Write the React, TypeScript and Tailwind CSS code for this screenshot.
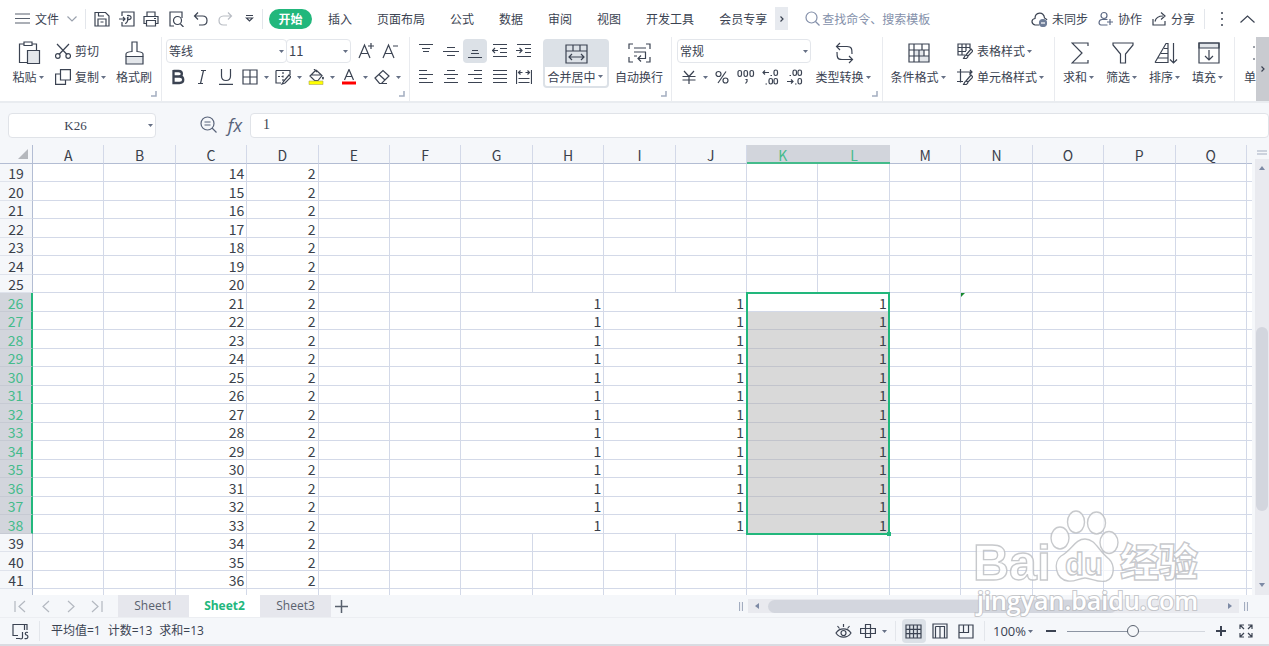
import React, { useState } from "react";

type IconProps = {
  w?: number;
  h?: number;
  className?: string;
  children: React.ReactNode;
};

const Icon = ({ w = 16, h = 16, className = "", children }: IconProps) => (
  <svg
    width={w}
    height={h}
    viewBox={`0 0 ${w} ${h}`}
    fill="none"
    stroke="currentColor"
    strokeWidth="1.2"
    className={`shrink-0 ${className}`}
    aria-hidden="true"
  >
    {children}
  </svg>
);

const Caret = () => (
  <span className="w-[9px] h-4 flex items-center justify-center shrink-0">
    <Icon w={5} h={3}>
      <path d="M0 0H5L2.5 3Z" fill="#667085" stroke="none" />
    </Icon>
  </span>
);

const Divider = () => <div className="w-px h-5 bg-[#e3e6eb] shrink-0" />;

const Launcher = () => (
  <button aria-label="更多设置" className="absolute right-1 bottom-1">
    <Icon w={6} h={6}>
      <path d="M5 0V5H0" stroke="#a3adc0" strokeWidth="1.5" />
    </Icon>
  </button>
);

/* ---------- top bar ---------- */

const quickIcons = [
  {
    name: "保存",
    icon: (
      <Icon>
        <path d="M1 1.500H11.500L15 5V15H1Z M4 15V8H12V15 M4.500 1.500V5H10 M6.500 11H9.500" />
      </Icon>
    ),
  },
  {
    name: "输出为PDF",
    icon: (
      <Icon>
        <path d="M3 5V1H15V15H3V11 M0 8H6 M4 6L6 8L4 10" />
        <path d="M8 4.500C13 3.500 13.500 9 9 8.500C8 8 8.500 6 9 6C9 9 9 12 6 12.500" />
      </Icon>
    ),
  },
  {
    name: "打印",
    icon: (
      <Icon>
        <path d="M4 5V1H12V5 M3.500 12.500H1V5.500H15V12.500H12.500 M3.500 9.500H12.500V15H3.500Z M11 7.500H13" />
      </Icon>
    ),
  },
  {
    name: "打印预览",
    icon: (
      <Icon>
        <path d="M6 15H2V1H14V7 M12.500 13L15.500 16" />
        <circle cx="9.500" cy="9.500" r="4" />
      </Icon>
    ),
  },
  {
    name: "撤销",
    icon: (
      <Icon>
        <path d="M5 1.500L1.500 5L5 8.500 M1.500 5H9.500C15.500 5 15.500 14 9.500 14H6" />
      </Icon>
    ),
  },
  {
    name: "恢复",
    icon: (
      <Icon className="text-[#b9bdc4]">
        <path d="M11 1.500L14.500 5L11 8.500 M14.500 5H6.500C.5 5 .5 14 6.500 14H10" />
      </Icon>
    ),
  },
  {
    name: "自定义",
    icon: (
      <Icon w={9} h={9}>
        <path d="M1 1.500H8 M1.500 4L4.500 7L7.500 4Z" />
      </Icon>
    ),
  },
];

const menus = [
  "插入",
  "页面布局",
  "公式",
  "数据",
  "审阅",
  "视图",
  "开发工具",
  "会员专享",
];

const TopBar = () => (
  <header className="h-[37px] flex items-center shrink-0">
    <button className="flex items-center pl-[15px]">
      <Icon w={15} h={11} className="mr-[5px]">
        <path d="M0 1H15 M0 5.500H15 M0 10H15" stroke="#59616e" />
      </Icon>
      文件
      <Icon w={10} h={6} className="ml-2">
        <path d="M.5 .5L5 5L9.500 .5" stroke="#9aa1ad" />
      </Icon>
    </button>
    <div className="ml-2 mr-1">
      <Divider />
    </div>
    <div className="w-[172px] flex justify-between">
      {quickIcons.map((item) => (
        <button
          key={item.name}
          aria-label={item.name}
          className="w-6 h-6 flex items-center justify-center"
        >
          {item.icon}
        </button>
      ))}
    </div>
    <Divider />
    <nav className="flex items-center gap-[25px] ml-1.5">
      <button className="w-[43px] h-5 rounded-full bg-[#22b77c] text-white font-bold -mr-[9px]">
        开始
      </button>
      {menus.map((menu) => (
        <button key={menu}>{menu}</button>
      ))}
    </nav>
    <button
      aria-label="更多选项卡"
      className="w-[13px] h-[23px] bg-[#e7eaef] ml-2 flex items-center justify-center"
    >
      <Icon w={4} h={6}>
        <path d="M.5 .5L3 3L.5 5.500" />
      </Icon>
    </button>
    <label className="flex items-center ml-[17px] text-[#8490aa]">
      <Icon className="mr-px">
        <circle cx="6.500" cy="6.500" r="5.500" />
        <path d="M10.500 10.500L14.500 14.500" />
      </Icon>
      <input
        aria-label="查找命令、搜索模板"
        placeholder="查找命令、搜索模板"
        className="w-[120px] outline-none placeholder:text-[#8490aa]"
      />
    </label>
    <div className="ml-auto flex items-center">
      <button className="flex items-center gap-1">
        <Icon w={17}>
          <path d="M8 14H4C0 13 0 8 4 7.500C4 1 13 0 13.500 7C15 7.500 15.500 8 16 9" />
          <circle cx="12" cy="12" r="3.500" fill="#6f7d98" stroke="#6f7d98" />
          <path d="M10 12H14" stroke="#fff" />
        </Icon>
        未同步
      </button>
      <button className="flex items-center gap-1 ml-2.5">
        <Icon className="text-[#5d6a85]">
          <circle cx="6" cy="4.500" r="3" />
          <path d="M9.500 8.500H4C0 9 .5 14 3 14H9.500 M9 11H15 M12 8V14" />
        </Icon>
        协作
      </button>
      <button className="flex items-center gap-1 ml-2.5">
        <Icon w={15}>
          <path d="M1 8V14H13V10 M3 10.500C4 6 7 5 11 5 M9 1.500L13 5L9 8.500" />
        </Icon>
        分享
      </button>
      <div className="ml-[9px] mr-4">
        <Divider />
      </div>
      <button aria-label="更多">
        <Icon w={2} h={14}>
          <path d="M0 1H2 M0 7H2 M0 13H2" strokeWidth="1.500" />
        </Icon>
      </button>
      <button aria-label="收起功能区" className="ml-[17px] mr-[14px]">
        <Icon w={15} h={8}>
          <path d="M.5 7.500L7.500 1L14.500 7.500" />
        </Icon>
      </button>
    </div>
  </header>
);

/* ---------- ribbon ---------- */

const Group = ({
  className,
  launcher,
  children,
}: {
  className: string;
  launcher?: boolean;
  children: React.ReactNode;
}) => (
  <section
    className={`relative flex items-start pt-0.5 border-r border-[#e9ebef] shrink-0 ${className}`}
  >
    {children}
    {launcher && <Launcher />}
  </section>
);

const BigButton = ({
  label,
  icon,
  caret,
  className,
}: {
  label: string;
  icon: React.ReactNode;
  caret?: boolean;
  className: string;
}) => (
  <button className={`flex flex-col items-center shrink-0 ${className}`}>
    <span className="h-7 flex items-center">{icon}</span>
    <span className="h-5 flex items-center whitespace-nowrap">
      {label}
      {caret && <Caret />}
    </span>
  </button>
);

const RowButton = ({
  label,
  icon,
  caret,
}: {
  label: string;
  icon: React.ReactNode;
  caret?: boolean;
}) => (
  <button className="h-6 flex items-center gap-1 whitespace-nowrap">
    {icon}
    <span className="flex items-center">
      {label}
      {caret && <Caret />}
    </span>
  </button>
);

const Tool = ({
  name,
  caret,
  active,
  children,
}: {
  name: string;
  caret?: boolean;
  active?: boolean;
  children: React.ReactNode;
}) => (
  <button
    aria-label={name}
    className={`h-6 flex items-center shrink-0 rounded-sm ${
      active ? "bg-[#dce1e7]" : ""
    }`}
  >
    <span className="w-6 flex items-center justify-center">{children}</span>
    {caret && <Caret />}
  </button>
);

const Combo = ({
  name,
  options,
  className,
}: {
  name: string;
  options: string[];
  className: string;
}) => (
  <div
    className={`h-6 flex items-center border border-[#e3e6eb] rounded-sm ${className}`}
  >
    <select
      aria-label={name}
      className="appearance-none flex-1 min-w-0 h-full pl-0.5 outline-none"
    >
      {options.map((o) => (
        <option key={o}>{o}</option>
      ))}
    </select>
    <Caret />
  </div>
);

const Lines = ({ d }: { d: string }) => (
  <Icon>
    <path d={d} />
  </Icon>
);

const vAligns = [
  { name: "顶端对齐", d: "M1 1.500H15 M4 5.500H12 M5 8.500H11" },
  { name: "垂直居中", d: "M4 4.500H12 M0 8.500H16 M4 12.500H12" },
  { name: "底端对齐", d: "M5 7.500H11 M4 10.500H12 M1 14.500H15", active: true },
  {
    name: "减少缩进",
    d: "M1 1.500H15 M8 5.500H15 M8 9.500H15 M1 13.500H15 M0 7.500H6 M3 5L.5 7.500L3 10",
  },
  {
    name: "增加缩进",
    d: "M1 1.500H15 M9 5.500H15 M9 9.500H15 M1 13.500H15 M0 7.500H6 M3.500 5L6 7.500L3.500 10",
  },
];

const hAligns = [
  { name: "左对齐", d: "M1 1.500H9 M1 5.500H15 M1 9.500H9 M1 13.500H15" },
  { name: "水平居中", d: "M4 1.500H12 M1 5.500H15 M4 9.500H12 M1 13.500H15" },
  { name: "右对齐", d: "M7 1.500H15 M1 5.500H15 M7 9.500H15 M1 13.500H15" },
  { name: "两端对齐", d: "M1 1.500H15 M1 5.500H15 M1 9.500H15 M1 13.500H15" },
  {
    name: "分散对齐",
    d: "M.5 1V15 M15.500 1V15 M2.500 9.500H13.500 M2.500 13.500H13.500 M2 3.500H6.500 M9.500 3.500H14 M4.500 1.500L2.500 3.500L4.500 5.500 M11.500 1.500L13.500 3.500L11.500 5.500",
  },
];

const ClipboardGroup = () => (
  <Group className="w-[162px] pl-2" launcher>
    <BigButton
      label="粘贴"
      caret
      className="w-[42px]"
      icon={
        <Icon w={23} h={24}>
          <path d="M6 3H1.500V21.500H9 M14 3H18.500V9 M6 1H14V4.500H6Z" />
          <path d="M9.500 9.500H21.500V22.500H9.500Z" fill="#e3e6ea" />
        </Icon>
      }
    />
    <div className="ml-[5px] w-[59px] flex flex-col gap-0.5">
      <RowButton
        label="剪切"
        icon={
          <Icon>
            <path d="M2 1L12 11.500 M14 1L4 11.500" />
            <circle cx="2.800" cy="13" r="2.300" />
            <circle cx="13.200" cy="13" r="2.300" />
          </Icon>
        }
      />
      <RowButton
        label="复制"
        caret
        icon={
          <Icon>
            <path d="M5.500 .6H15.400V11H5.500Z M5.500 5H.6V15.400H10.500V11" />
          </Icon>
        }
      />
    </div>
    <BigButton
      label="格式刷"
      className="w-10"
      icon={
        <Icon w={19} h={24}>
          <path d="M1 15.500H18V23H1Z" fill="#e3e6ea" />
          <path d="M1 15.500V13C1 11.500 2 11 7 10.500V1H12V10.500C17 11 18 11.500 18 13V15.500" />
        </Icon>
      }
    />
  </Group>
);

const FontGroup = () => (
  <Group className="w-[248px] pl-1 flex-col gap-0.5" launcher>
    <div className="flex">
      <Combo name="字体" options={["等线", "宋体"]} className="w-[121px]" />
      <Combo
        name="字号"
        options={["11", "12", "14"]}
        className="w-[65px] mr-[3px] -ml-px text-[13px]"
      />
      <Tool name="增大字号">
        <Icon>
          <path d="M1 15L6.500 2L12 15 M3 10.500H10 M10 3H16 M13 0V6" />
        </Icon>
      </Tool>
      <Tool name="减小字号">
        <Icon>
          <path d="M1 15L6.500 2L12 15 M3 10.500H10 M11 3H16" />
        </Icon>
      </Tool>
    </div>
    <div className="flex">
      <Tool name="加粗">
        <Icon>
          <path
            d="M3.500 2H8.500C13 2 13 7.500 8.500 7.500H3.500 M3.500 7.500H9.500C14.500 7.500 14.500 14 9.500 14H3.500V1"
            strokeWidth="2.300"
          />
        </Icon>
      </Tool>
      <Tool name="倾斜">
        <Icon>
          <path d="M7 1.500H12 M4 14.500H9 M9.500 1.500L6.500 14.500" />
        </Icon>
      </Tool>
      <Tool name="下划线">
        <Icon>
          <path d="M3.500 0V7C3.500 13 12.500 13 12.500 7V0 M1 15.400H15" />
        </Icon>
      </Tool>
      <Tool name="边框" caret>
        <Icon>
          <path d="M1 1H15V15H1Z M8 1V15 M1 8H15" />
        </Icon>
      </Tool>
      <Tool name="绘图边框" caret>
        <Icon>
          <path d="M1 1.500H15V6 M1 1.500V14H6" />
          <path d="M3 7.500H10 M8 3V12" strokeDasharray="2 1.500" />
          <path d="M8.500 12.500L14 6L16 8L10 14L7 15Z" />
        </Icon>
      </Tool>
      <Tool name="填充颜色" caret>
        <Icon>
          <path d="M8 1L2 7L6.500 11.500H10L14 6.500L8 1 M6 0L9 3 M3 6H13 M15 8C14 10 16 11 15 8" />
          <path d="M1 12H15V15.500H1Z" fill="#ff0" stroke="#a8a45a" strokeWidth=".6" />
        </Icon>
      </Tool>
      <Tool name="字体颜色" caret>
        <Icon>
          <path d="M3.500 11L8 .5L12.500 11 M5 7.500H11" />
          <path d="M1 12.500H15V15.500H1Z" fill="#f00" stroke="none" />
        </Icon>
      </Tool>
      <Tool name="清除格式" caret>
        <Icon>
          <path d="M1 9L9 1.500L15 7L7.500 14.500H5.500Z M5 5.500L11 11 M7 14.500H13" />
        </Icon>
      </Tool>
    </div>
  </Group>
);

const AlignGroup = () => (
  <Group className="w-[262px] pl-1" launcher>
    <div className="w-[122px] flex flex-col gap-0.5">
      <div className="flex justify-between">
        {vAligns.map((a) => (
          <Tool key={a.name} name={a.name} active={a.active}>
            <Lines d={a.d} />
          </Tool>
        ))}
      </div>
      <div className="flex justify-between">
        {hAligns.map((a) => (
          <Tool key={a.name} name={a.name}>
            <Lines d={a.d} />
          </Tool>
        ))}
      </div>
    </div>
    <button className="ml-[7px] w-[66px] h-[49px] flex flex-col shrink-0 rounded-sm border-2 border-[#dce1e7] bg-white">
      <span className="h-[26px] w-full flex items-center justify-center bg-[#dce1e7]">
        <Icon w={23} h={20}>
          <path d="M1 1H22V19H1Z M1 7H22 M8 1V7 M15 1V7 M4 13H19 M7 10L4 13L7 16 M16 10L19 13L16 16" />
        </Icon>
      </span>
      <span className="h-[19px] w-full flex items-center justify-center whitespace-nowrap">
        合并居中
        <Caret />
      </span>
    </button>
    <BigButton
      label="自动换行"
      className="w-[52px] ml-1"
      icon={
        <Icon w={23} h={20}>
          <path d="M5 1H1V6 M18 1H22V6 M1 14V19H5 M22 14V19H18 M6 5H18 M6 9H18 M6 13H9 M17.500 9V15.500H10 M13 12.500L10 15.500L13 18.500" />
        </Icon>
      }
    />
  </Group>
);

const NumberGroup = () => (
  <Group className="w-[211px] pl-[5px]" launcher>
    <div className="w-[134px] flex flex-col gap-0.5">
      <Combo name="数字格式" options={["常规", "数值", "文本"]} className="w-full" />
      <div className="flex">
        <Tool name="货币" caret>
          <Icon>
            <path d="M3 2L8 7.500L13 2 M1.500 7.500H14.500 M1.500 11H14.500 M8 7.500V15" />
          </Icon>
        </Tool>
        <Tool name="百分比">
          <Icon>
            <circle cx="4.500" cy="5" r="2.500" />
            <circle cx="11.500" cy="11.500" r="2.500" />
            <path d="M12 2.500L4 14" />
          </Icon>
        </Tool>
        <Tool name="千位分隔">
          <Icon w={18}>
            <rect x="1" y="1.500" width="3.500" height="6" rx="1.700" />
            <rect x="7" y="1.500" width="3.500" height="6" rx="1.700" />
            <rect x="13" y="1.500" width="3.500" height="6" rx="1.700" />
            <path d="M8.500 10.500H10V12.500L8.500 14.500" />
          </Icon>
        </Tool>
        <Tool name="增加小数位">
          <Icon w={17}>
            <path d="M1 3.500H7 M3 1.500L1 3.500L3 5.500 M8.500 6.500H10 M3.500 15H5" />
            <rect x="12" y="1" width="3.500" height="5.500" rx="1.700" />
            <rect x="7" y="9.500" width="3.500" height="5.500" rx="1.700" />
            <rect x="12" y="9.500" width="3.500" height="5.500" rx="1.700" />
          </Icon>
        </Tool>
        <Tool name="减少小数位">
          <Icon w={17}>
            <path d="M1 12.500H7 M5 10.500L7 12.500L5 14.500 M3.500 6.500H5 M9 15H10.500" />
            <rect x="7" y="1" width="3.500" height="5.500" rx="1.700" />
            <rect x="12" y="1" width="3.500" height="5.500" rx="1.700" />
            <rect x="12" y="9.500" width="3.500" height="5.500" rx="1.700" />
          </Icon>
        </Tool>
      </div>
    </div>
    <BigButton
      label="类型转换"
      caret
      className="w-[60px] ml-[3px]"
      icon={
        <Icon w={19} h={22}>
          <path d="M5 1L1.500 4.500L5 8 M1.500 4.500H12C17 4.500 17 7 17 12 M2 10C2 15 2 17.500 7 17.500H17.500 M14 14L17.500 17.500L14 21" />
        </Icon>
      }
    />
  </Group>
);

const StyleGroup = () => (
  <Group className="w-[172px] pl-1.5">
    <BigButton
      label="条件格式"
      caret
      className="w-[60px]"
      icon={
        <Icon w={22} h={20}>
          <path d="M6 7H16V13H21V19H11V13H6Z" fill="#e3e6ea" stroke="none" />
          <path d="M1 1H21V19H1Z M1 7H21 M1 13H21 M6 1V19 M14 1V7 M11 7V19 M16 7V13" />
        </Icon>
      }
    />
    <div className="ml-2 flex flex-col gap-0.5">
      <RowButton
        label="表格样式"
        caret
        icon={
          <Icon>
            <path d="M8 12H1V1H13V6 M1 4.500H13 M1 8.500H9 M5 1V12 M9 1V8" />
            <path d="M9 12L14 6L16 8L11 13Z M9 12C7 12.500 8 15 6 15.500C9 16 11 15 11 13" />
          </Icon>
        }
      />
      <RowButton
        label="单元格样式"
        caret
        icon={
          <Icon>
            <path d="M0 3H15 M3.500 0V13.500 M13 1L15 3L13 5 M0 12.500H6 M13 3V6" />
            <path d="M9 12L14 6L16 8L11 13Z M9 12C7 12.500 8 15 6 15.500C9 16 11 15 11 13" />
          </Icon>
        }
      />
    </div>
  </Group>
);

const editTools = [
  {
    label: "求和",
    icon: (
      <Icon w={18} h={22}>
        <path d="M17 4V1H1L11 11L1 21H17V18" />
      </Icon>
    ),
  },
  {
    label: "筛选",
    icon: (
      <Icon w={22} h={22}>
        <path d="M1 1H21V3L13.500 12V21H8.500V12L1 3Z" />
      </Icon>
    ),
  },
  {
    label: "排序",
    icon: (
      <Icon w={24} h={22}>
        <path d="M1 20.500L12 1.500H14V20.500H1 M10 6.500H14 M7 11.500H14 M4 16H14 M19.500 1V21 M16 17.500L19.500 21L23 17.500" />
      </Icon>
    ),
  },
  {
    label: "填充",
    icon: (
      <Icon w={22} h={22}>
        <path d="M1 1H21V6H1Z" fill="#e3e6ea" />
        <path d="M1 1H21V21H1Z M11 8V18 M7 14L11 18L15 14" />
      </Icon>
    ),
  },
];

const Ribbon = () => (
  <div className="h-16 flex shrink-0 overflow-hidden">
    <ClipboardGroup />
    <FontGroup />
    <AlignGroup />
    <NumberGroup />
    <StyleGroup />
    <Group className="w-[180px] pl-[3px]">
      {editTools.map((tool) => (
        <BigButton
          key={tool.label}
          label={tool.label}
          icon={tool.icon}
          caret
          className="w-[43px]"
        />
      ))}
    </Group>
    <div className="flex-1 min-w-0 overflow-hidden flex items-start pt-0.5 pl-[7px]">
      <BigButton
        label="单元格"
        className="w-10"
        icon={
          <Icon w={20} h={20}>
            <path d="M1 4H3 M1 16H3 M7 4H19V16H7" />
          </Icon>
        }
      />
    </div>
    <button
      aria-label="向右滚动功能区"
      className="w-[13px] shrink-0 bg-[#c9cbd0] flex items-center justify-center"
    >
      <Icon w={4} h={6}>
        <path d="M.5 .5L3 3L.5 5.500" />
      </Icon>
    </button>
  </div>
);

const FormulaBar = () => (
  <div className="h-[43px] flex items-center pl-2 pb-px border-t-2 border-[#e9ecf0] shrink-0 pt-1">
    <div className="w-[148px] h-[25px] flex items-center bg-white border border-[#e0e3e8] rounded-sm">
      <input
        aria-label="名称框"
        defaultValue="K26"
        className="flex-1 min-w-0 pr-1 pt-0.5 text-center text-[13px] font-[Liberation_Serif,serif] outline-none"
      />
      <Caret />
    </div>
    <button aria-label="浏览公式结果" className="ml-11">
      <Icon w={18} h={18} className="text-[#59647a]">
        <circle cx="7.500" cy="7.500" r="6.500" />
        <path d="M12 12L16.500 16.500 M4.500 6H10.500 M4.500 9H10.500" />
      </Icon>
    </button>
    <button
      aria-label="插入函数"
      className="ml-[7px] w-5 text-[18px] leading-5 italic font-[Open_Sans,sans-serif] text-[#59647a]"
    >
      fx
    </button>
    <input
      aria-label="编辑栏"
      defaultValue="1"
      className="ml-[5px] flex-1 min-w-0 h-[25px] pl-3 bg-white border border-[#e0e3e8] rounded-sm text-[14px] font-[Liberation_Serif,serif] outline-none"
    />
  </div>
);

/* ---------- sheet ---------- */

const columns = "ABCDEFGHIJKLMNOPQ".split("");
const rows = Array.from({ length: 24 }, (_, i) => 19 + i);
const FIRST = 26;
const LAST = 38;

const cell =
  "border-r border-b border-[#d3d9e8] px-0.5 pt-0.5 pb-0 text-right leading-[15px]";

const SheetRow = ({ n }: { n: number }) => {
  const selected = n >= FIRST && n <= LAST;
  const merged = selected ? ["GH", "IJ", "KL"] : [];
  const height = n % 2 ? "h-[18px]" : "h-[19px]";

  const valueOf = (col: string) => {
    if (n > 41) return "";
    if (col === "C") return n - 5;
    if (col === "D") return 2;
    return "";
  };

  return (
    <tr className={height}>
      <th
        scope="row"
        className={`px-0 pt-0.5 pb-0 border-b font-normal leading-[15px] ${
          selected
            ? "bg-[#d2d5dc] text-[#44bb8b] border-[#c6cad3] border-r-2 border-r-[#22b77c]"
            : "border-[#dfe3ec] border-r border-r-[#b3bdd3]"
        }`}
      >
        {n > 41 ? "" : n}
      </th>
      {columns.map((col) => {
        const span = merged.find((m) => m[0] === col);
        if (!span && merged.some((m) => m[1] === col)) return null;
        if (span === "KL") {
          return (
            <td
              key={col}
              colSpan={2}
              className={`relative ${cell} ${
                n === FIRST ? "bg-white" : "bg-[#d9d9d9] border-b-[#c2c4cc]"
              }`}
            >
              1
              {n === FIRST && (
                <div className="absolute z-10 -left-px -right-px -top-px h-[243px] border-2 border-[#22b77c] pointer-events-none">
                  <div className="absolute -right-[3px] -bottom-[3px] size-1 bg-[#22b77c]" />
                </div>
              )}
            </td>
          );
        }
        return (
          <td
            key={col}
            colSpan={span ? 2 : 1}
            className={`${cell} bg-white ${col === "N" ? "relative" : ""}`}
          >
            {span ? 1 : valueOf(col)}
            {col === "N" && n === FIRST && (
              <Icon w={4} h={4} className="absolute left-0 top-0">
                <path d="M0 0H4L0 4Z" fill="#18892f" stroke="none" />
              </Icon>
            )}
          </td>
        );
      })}
      <td className="border-b border-[#d3d9e8] bg-white p-0" />
    </tr>
  );
};

const Grid = () => (
  <div className="flex-1 min-w-0 overflow-hidden">
    <table className="w-full table-fixed border-separate border-spacing-0 text-[14px] font-['Noto_Sans_CJK_SC',sans-serif] text-[#3a3f4a]">
      <colgroup>
        <col className="w-[33px]" />
        {columns.map((c) => (
          <col key={c} />
        ))}
        <col className="w-[5px]" />
      </colgroup>
      <thead>
        <tr className="h-[19px]">
          <th className="p-0 border-b border-r border-[#b3bdd3]">
            <Icon w={10} h={10} className="ml-auto mr-1">
              <path d="M10 0V10H0Z" fill="#b5b8bd" stroke="none" />
            </Icon>
          </th>
          {columns.map((c) => (
            <th
              key={c}
              scope="col"
              className={`px-0 pt-0.5 pb-0 font-normal leading-4 border-b ${
                c === "K" || c === "L"
                  ? "bg-[#d2d5dc] text-[#44bb8b] border-[#44bb8b] shadow-[inset_0_-1px_0_#44bb8b]"
                  : "border-r border-b-[#b3bdd3] border-r-[#d3d9e8]"
              }`}
            >
              {c}
            </th>
          ))}
          <th className="p-0 border-b border-[#b3bdd3]" />
        </tr>
      </thead>
      <tbody>
        {rows.map((n) => (
          <SheetRow key={n} n={n} />
        ))}
      </tbody>
    </table>
  </div>
);

const VerticalScroll = () => (
  <div className="w-[17px] pl-[3px] flex flex-col items-stretch shrink-0">
    <div className="h-[14px] flex items-center justify-center">
      <Icon w={10} h={5}>
        <path d="M0 1H10 M0 4H10" stroke="#a3adc0" />
      </Icon>
    </div>
    <div className="flex-1 bg-[#e9eaef] flex flex-col items-center">
      <Icon w={6} h={4} className="mt-[7px]">
        <path d="M0 4H6L3 0Z" fill="#7d8aa5" stroke="none" />
      </Icon>
      <div className="flex-1 w-full flex flex-col px-px">
        <div className="grow-[157]" />
        <div className="grow-[184] rounded-full bg-[#d3d6de]" />
        <div className="grow-[72]" />
      </div>
      <Icon w={6} h={4} className="mb-2">
        <path d="M0 0H6L3 4Z" fill="#7d8aa5" stroke="none" />
      </Icon>
    </div>
  </div>
);

const sheetNav = [
  { name: "第一张", d: "M1 1V12 M11 1L5 6.500L11 12" },
  { name: "上一张", d: "M9 1L3 6.500L9 12" },
  { name: "下一张", d: "M3 1L9 6.500L3 12" },
  { name: "最后一张", d: "M1 1L7 6.500L1 12 M11 1V12" },
];

const SheetTabs = () => {
  const [active, setActive] = useState("Sheet2");

  return (
    <div className="h-[22px] flex items-center shrink-0 text-[#59616e]">
      <div className="w-[118px] flex justify-between pl-[14px] pr-[15px]">
        {sheetNav.map((b) => (
          <button key={b.name} aria-label={b.name}>
            <Icon w={12} h={13} className="text-[#b3b8c0]">
              <path d={b.d} />
            </Icon>
          </button>
        ))}
      </div>
      {["Sheet1", "Sheet2", "Sheet3"].map((s) => (
        <button
          key={s}
          onClick={() => setActive(s)}
          className={`w-[71px] h-[22px] text-[12px] font-[Open_Sans,sans-serif] ${
            s === active ? "bg-white text-[#22b77c] font-bold" : "bg-[#e6e7ed]"
          }`}
        >
          {s}
        </button>
      ))}
      <button aria-label="新建工作表" className="ml-1">
        <Icon w={13} h={13}>
          <path d="M0 6.500H13 M6.500 0V13" strokeWidth="1.500" />
        </Icon>
      </button>
      <div className="ml-auto w-[509px] flex items-center text-[#a3adc0]">
        <Icon w={4} h={9}>
          <path d="M.5 0V9 M3.500 0V9" />
        </Icon>
        <div className="ml-[5px] flex-1 h-[14px] bg-[#e9eaef] flex items-center">
          <Icon w={4} h={6} className="ml-[7px]">
            <path d="M4 0V6L0 3Z" fill="#7d8aa5" stroke="none" />
          </Icon>
          <div className="flex-1 flex px-[9px]">
            <div className="grow-[347] h-[13px] rounded-full bg-[#d3d6de]" />
            <div className="grow-[102]" />
          </div>
          <Icon w={4} h={6} className="mr-[7px]">
            <path d="M0 0V6L4 3Z" fill="#7d8aa5" stroke="none" />
          </Icon>
        </div>
        <Icon w={4} h={9} className="ml-[5px]">
          <path d="M.5 0V9 M3.500 0V9" />
        </Icon>
      </div>
      <div className="w-[21px]" />
    </div>
  );
};

const views = [
  {
    name: "普通视图",
    active: true,
    icon: (
      <Icon w={17} h={15}>
        <path d="M1 1H16V14H1Z M1 5.300H16 M1 9.700H16 M4.700 1V14 M8.500 1V14 M12.300 1V14" />
      </Icon>
    ),
  },
  {
    name: "分页预览",
    icon: (
      <Icon w={16} h={16}>
        <path d="M1 1H15V15H1Z M3.500 3.500H12.500V15 M3.500 3.500V15 M8 3.500V15" />
      </Icon>
    ),
  },
  {
    name: "阅读版式",
    icon: (
      <Icon w={16} h={15}>
        <path d="M1 1H15V14H1Z M5.500 1V8 M1 8.500H10.500V1" />
      </Icon>
    ),
  },
];

const StatusBar = () => {
  const [zoom, setZoom] = useState(48);

  return (
    <footer className="h-[29px] flex items-center shrink-0 border-t border-[#eceef2] border-b-2 border-b-[#d9dce2]">
      <button aria-label="JS宏" className="ml-3 mr-2.5">
        <Icon w={17} h={17}>
          <path d="M6 12.500H1V1.500H15V7 M4 15.500H8 M12.500 1.500V7 M10.500 9V14.500C10.500 16 9 16 7.500 15.500 M16 9.500C13 8.500 12.500 11.500 14.500 12C17 13 16 16.500 12.500 15.500" />
        </Icon>
      </button>
      <Divider />
      <div className="ml-[11px] flex gap-[7px] font-['Open_Sans','Noto_Sans_CJK_SC',sans-serif]">
        <span>平均值=1</span>
        <span>计数=13</span>
        <span>求和=13</span>
      </div>
      <div className="ml-auto flex items-center">
        <Tool name="护眼模式">
          <Icon w={17} h={17}>
            <path d="M1 10C4.500 4.500 12.500 4.500 16 10C12.500 15.500 4.500 15.500 1 10Z M8.500 1V4 M2.500 3L4.500 5.500 M14.500 3L12.500 5.500" />
            <circle cx="8.500" cy="10" r="2.500" />
          </Icon>
        </Tool>
        <Tool name="阅读模式" caret>
          <Icon>
            <path d="M5.500 1.500H10.500V14.500H5.500Z M.6 5.500H15.400V10.500H.6Z" />
          </Icon>
        </Tool>
        <div className="ml-1.5 mr-1.5">
          <Divider />
        </div>
        <div className="flex gap-0.5">
          {views.map((v) => (
            <Tool key={v.name} name={v.name} active={v.active}>
              {v.icon}
            </Tool>
          ))}
        </div>
        <div className="ml-1.5 mr-2">
          <Divider />
        </div>
        <button className="flex items-center text-[13px] font-[Open_Sans,sans-serif]">
          100%
          <Caret />
        </button>
        <button aria-label="缩小" className="ml-2.5">
          <Icon w={12} h={12}>
            <path d="M1 6H11" strokeWidth="2" />
          </Icon>
        </button>
        <input
          type="range"
          aria-label="缩放"
          value={zoom}
          onChange={(e) => setZoom(Number(e.target.value))}
          className="w-[138px] h-3 mx-2.5 appearance-none bg-[linear-gradient(to_right,#8d95a3_50%,#d3d7de_50%)] bg-[length:100%_1px] bg-center bg-no-repeat [&::-webkit-slider-thumb]:appearance-none [&::-webkit-slider-thumb]:size-3 [&::-webkit-slider-thumb]:rounded-full [&::-webkit-slider-thumb]:border [&::-webkit-slider-thumb]:border-[#59616e] [&::-webkit-slider-thumb]:bg-[#f5f7fa]"
        />
        <button aria-label="放大">
          <Icon w={12} h={12}>
            <path d="M1 6H11 M6 1V11" strokeWidth="2" />
          </Icon>
        </button>
        <button aria-label="全屏" className="ml-3 mr-4">
          <Icon w={14} h={14}>
            <path d="M5 1H1V5 M9 1H13V5 M5 13H1V9 M9 13H13V9 M1 1L5 5 M13 1L9 5 M1 13L5 9 M13 13L9 9" />
          </Icon>
        </button>
      </div>
    </footer>
  );
};

const Watermark = () => (
  <svg
    width="250"
    height="115"
    viewBox="0 0 250 115"
    className="absolute right-[59px] bottom-[26px] z-20 pointer-events-none"
    fill="#fff"
    fillOpacity=".7"
    stroke="#b9bbbf"
    strokeOpacity=".8"
    strokeWidth="1.4"
    aria-hidden="true"
  >
    <text x="13" y="75" fontSize="50" fontWeight="700" fontFamily="Liberation Sans, sans-serif">
      Bai
    </text>
    <ellipse cx="100" cy="33" rx="9" ry="11" />
    <ellipse cx="116" cy="17" rx="8.500" ry="11" />
    <ellipse cx="136.500" cy="18" rx="9" ry="11" />
    <ellipse cx="149" cy="37.500" rx="9" ry="11" />
    <path d="M125 34C115 34 112 45 101 51C93 57 95 74 108 76C115 77 119 73 125 73C131 73 138 78 146 76C155 73 155 60 149 54C138 45 135 34 125 34Z" />
    <text x="105" y="70" fontSize="31" fontFamily="Liberation Sans, sans-serif" fontWeight="700">
      du
    </text>
    <text x="160" y="71" fontSize="39" fontWeight="900" fontFamily="Noto Sans CJK SC, sans-serif">
      经验
    </text>
    <text
      x="17"
      y="105"
      fontSize="25"
      fontWeight="600"
      fontFamily="Open Sans, sans-serif"
      strokeWidth="2"
      paintOrder="stroke"
      fillOpacity="1"
    >
      jingyan.baidu.com
    </text>
  </svg>
);

const App = () => {
  return (
    <div className="relative w-full h-screen flex flex-col overflow-hidden bg-[#f5f7fa] text-[12px] leading-4 text-[#3b4352] font-['Noto_Sans_CJK_SC',sans-serif]">
      <div className="bg-white shrink-0">
        <TopBar />
        <Ribbon />
      </div>
      <FormulaBar />
      <main className="flex-1 min-h-0 flex overflow-hidden pt-px">
        <Grid />
        <VerticalScroll />
      </main>
      <SheetTabs />
      <StatusBar />
      <Watermark />
    </div>
  );
};

export default App;
